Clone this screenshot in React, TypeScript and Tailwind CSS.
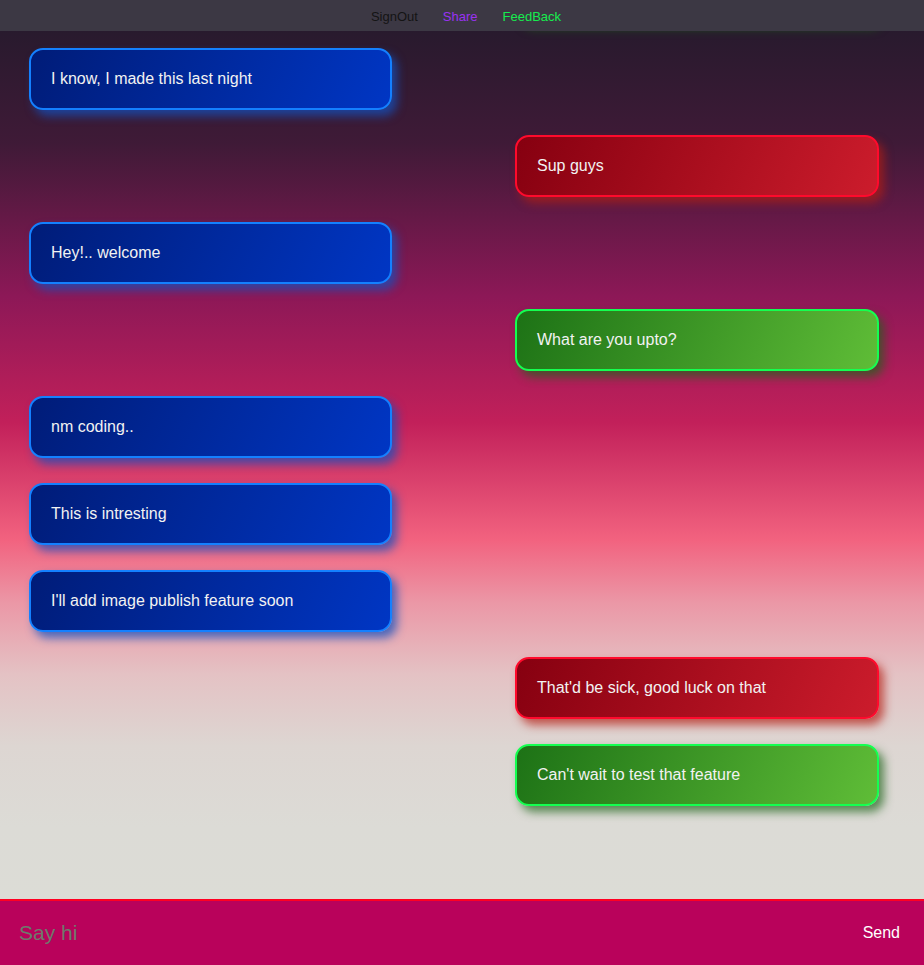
import React from 'react';

type Side = 'left' | 'right';
type Tone = 'blue' | 'red' | 'green';

interface Message {
  id: number;
  text: string;
  side: Side;
  tone: Tone;
}

const messages: Message[] = [
  { id: 0, text: 'Welcome', side: 'right', tone: 'green' },
  { id: 1, text: 'I know, I made this last night', side: 'left', tone: 'blue' },
  { id: 2, text: 'Sup guys', side: 'right', tone: 'red' },
  { id: 3, text: 'Hey!.. welcome', side: 'left', tone: 'blue' },
  { id: 4, text: 'What are you upto?', side: 'right', tone: 'green' },
  { id: 5, text: 'nm coding..', side: 'left', tone: 'blue' },
  { id: 6, text: 'This is intresting', side: 'left', tone: 'blue' },
  { id: 7, text: "I'll add image publish feature soon", side: 'left', tone: 'blue' },
  { id: 8, text: "That'd be sick, good luck on that", side: 'right', tone: 'red' },
  { id: 9, text: "Can't wait to test that feature", side: 'right', tone: 'green' },
];

const toneClasses: Record<Tone, string> = {
  blue: 'border-[#1480ff] bg-[linear-gradient(115deg,#001c78,#0036c4)] shadow-[5px_6px_10px_rgba(20,80,190,0.75)]',
  red: 'border-[#ff0a2c] bg-[linear-gradient(115deg,#860010,#cc1c2c)] shadow-[5px_6px_10px_rgba(180,30,20,0.7)]',
  green: 'border-[#14ff50] bg-[linear-gradient(115deg,#1d7216,#5fbd37)] shadow-[5px_6px_10px_rgba(30,100,25,0.7)]',
};

function Bubble({ message }: { message: Message }) {
  const sideClass = message.side === 'left' ? 'self-start -ml-px w-[363px]' : 'self-end mr-[15px] w-[364px]';
  return (
    <div
      className={`${sideClass} ${toneClasses[message.tone]} shrink-0 h-[62px] flex items-center rounded-[14px] border-2 pl-[20px] text-[16px] text-[#f2f2f2]`}
    >
      {message.text}
    </div>
  );
}

export default function App() {
  return (
    <div className="relative w-full h-[965px] overflow-hidden font-['Liberation_Sans',Arial,sans-serif]">
      {/* Top nav */}
      <div className="absolute top-0 left-0 right-0 z-10 h-[31px] bg-[#3c3844] flex items-center justify-center gap-[25px] pl-[8px] pt-[2px] text-[13px]">
        <a className="text-[#141414]">SignOut</a>
        <a className="text-[#9a32f2]">Share</a>
        <a className="text-[#16ec4e]">FeedBack</a>
      </div>

      {/* Messages */}
      <div className="h-[899px] overflow-hidden flex flex-col justify-end gap-[25px] px-[30px] pb-[93px] bg-[linear-gradient(to_bottom,#221a2b_0%,#3f1a37_16%,#8d1857_33%,#c2205a_47%,#f2627f_60%,#eb97a6_67%,#e4c2c4_75%,#ddd6d2_83%,#dcdbd6_92%,#dcdcd6_100%)]">
        {messages.map((m) => (
          <Bubble key={m.id} message={m} />
        ))}
      </div>

      {/* Composer */}
      <div className="h-[66px] border-t-2 border-[#ff0022] bg-[#b9025b] flex items-center justify-between pl-[19px] pr-[24px]">
        <input
          placeholder="Say hi"
          className="bg-transparent outline-none text-[21px] text-white placeholder:text-[#6d7a6c] w-[600px]"
        />
        <button className="text-[16px] text-white">Send</button>
      </div>
    </div>
  );
}
